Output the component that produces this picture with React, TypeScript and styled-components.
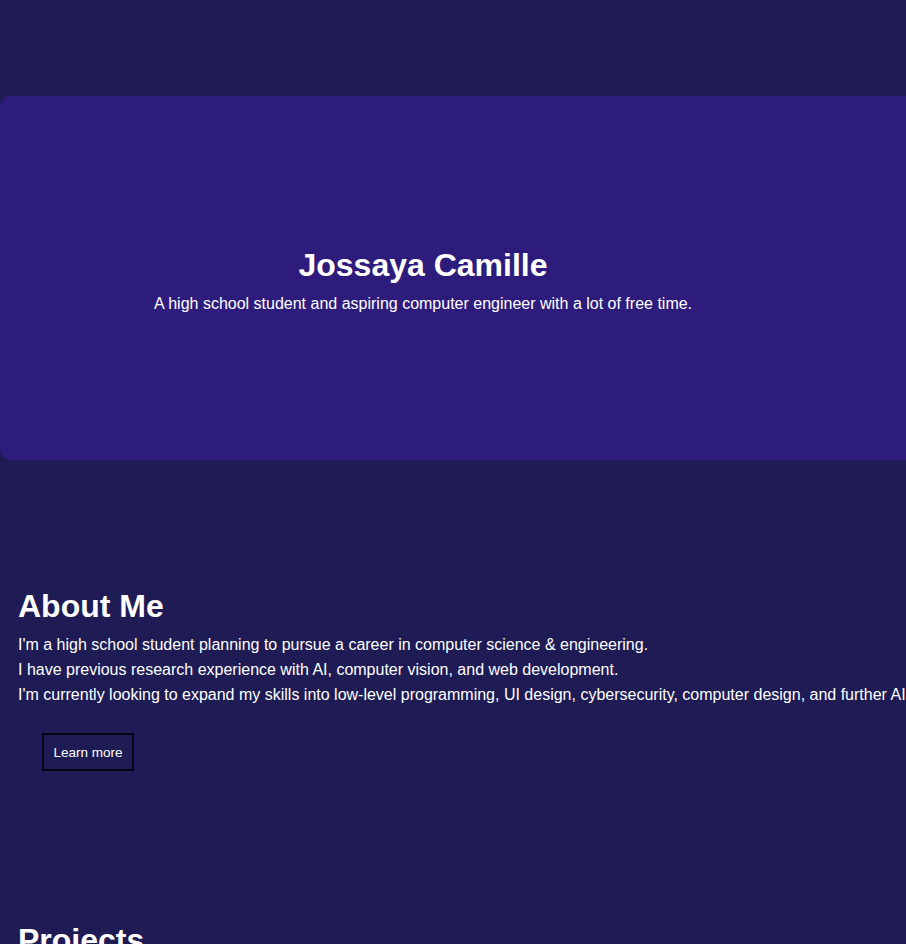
import React from "react";
import styled, { createGlobalStyle } from "styled-components";

const GlobalStyle = createGlobalStyle`
  html, body {
    margin: 0;
    padding: 0;
    background: #1e1b55;
    color: #ffffff;
    font-family: "Liberation Sans", Arial, sans-serif;
  }
`;

const Page = styled.main`
  padding-top: 96px;
`;

const Hero = styled.section`
  width: 1000px;
  height: 364px;
  background: #2e1c7c;
  border-radius: 10px;
  display: flex;
  align-items: center;
`;

const HeroInner = styled.div`
  width: 846px;
  padding-top: 4px;
  text-align: center;
`;

const Name = styled.h1`
  margin: 0 0 10px;
  font-size: 32px;
  font-weight: 700;
  line-height: 37px;
`;

const Tagline = styled.p`
  margin: 0;
  font-size: 16px;
  line-height: 20px;
`;

const Section = styled.section<{ $top: number }>`
  padding: ${(p) => p.$top}px 18px 0;
`;

const Heading = styled.h2`
  margin: 0 0 7px;
  font-size: 32px;
  font-weight: 700;
  line-height: 37px;
`;

const Line = styled.p`
  margin: 0;
  font-size: 16px;
  line-height: 25px;
  white-space: nowrap;
`;

const Button = styled.button`
  margin: 26px 0 0 24px;
  width: 92px;
  height: 38px;
  background: transparent;
  border: 2px solid #05051a;
  color: #ffffff;
  font-family: "Liberation Sans", Arial, sans-serif;
  font-size: 13.5px;
  cursor: pointer;
`;

export default function App() {
  return (
    <>
      <GlobalStyle />
      <Page>
        <Hero>
          <HeroInner>
            <Name>Jossaya Camille</Name>
            <Tagline>
              A high school student and aspiring computer engineer with a lot of free time.
            </Tagline>
          </HeroInner>
        </Hero>
        <Section $top={128}>
          <Heading>About Me</Heading>
          <Line>
            I'm a high school student planning to pursue a career in computer science &amp; engineering.
          </Line>
          <Line>I have previous research experience with AI, computer vision, and web development.</Line>
          <Line>
            I'm currently looking to expand my skills into low-level programming, UI design, cybersecurity, computer
            design, and further AI.
          </Line>
          <Button>Learn more</Button>
        </Section>
        <Section $top={151}>
          <Heading>Projects</Heading>
        </Section>
      </Page>
    </>
  );
}
